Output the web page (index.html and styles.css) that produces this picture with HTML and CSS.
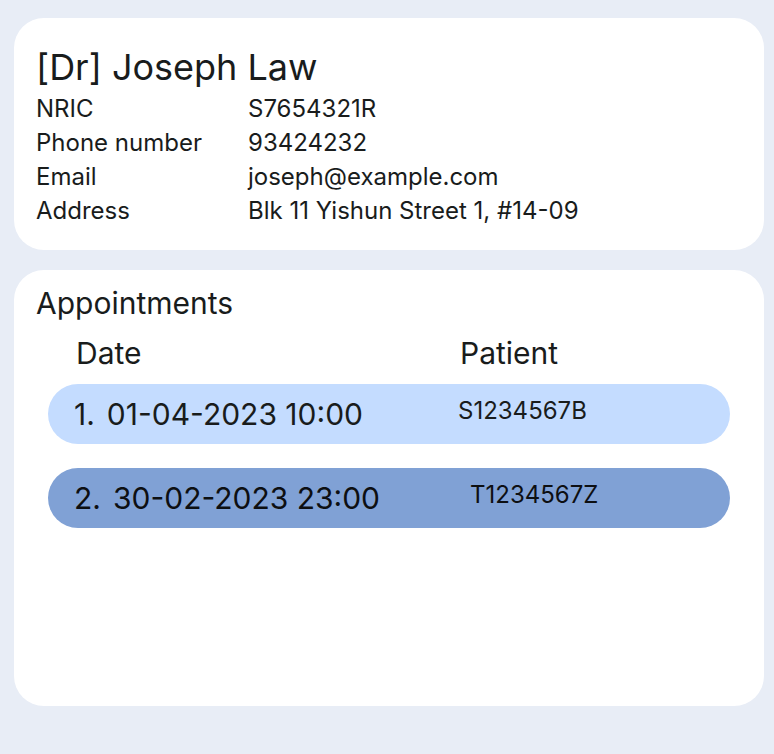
FILE: index.html
```html
<!DOCTYPE html>
<html lang="en">
<head>
<meta charset="utf-8">
<title>Doctor details</title>
<link rel="stylesheet" href="styles.css">
</head>
<body>
<main class="page">
  <section class="card profile">
    <h1 class="name">[Dr] Joseph Law</h1>
    <dl class="details">
      <dt>NRIC</dt><dd>S7654321R</dd>
      <dt>Phone number</dt><dd>93424232</dd>
      <dt>Email</dt><dd>joseph@example.com</dd>
      <dt>Address</dt><dd>Blk 11 Yishun Street 1, #14-09</dd>
    </dl>
  </section>
  <section class="card appointments">
    <h2 class="title">Appointments</h2>
    <table class="list">
      <thead>
        <tr class="head"><th>Date</th><th>Patient</th></tr>
      </thead>
      <tbody>
        <tr class="row"><td class="date"><span>1.</span><span>01-04-2023 10:00</span></td><td class="patient">S1234567B</td></tr>
        <tr class="row row-alt"><td class="date"><span>2.</span><span>30-02-2023 23:00</span></td><td class="patient">T1234567Z</td></tr>
      </tbody>
    </table>
  </section>
</main>
</body>
</html>
```
FILE: styles.css
```css
* {
  box-sizing: border-box;
}

body {
  margin: 0;
  background: #e8edf6;
  color: #191c1c;
  font-family: Inter, "Liberation Sans", sans-serif;
}

.page {
  display: flex;
  flex-direction: column;
  gap: 20px;
  min-height: 100vh;
  padding: 18px 10px 48px 14px;
}

.card {
  background: #fff;
  border-radius: 30px;
}

.profile {
  padding: 24px 22px 22px;
}

.appointments {
  flex: 1;
  padding: 14px 34px 24px;
}

h1,
h2,
dl,
dd {
  margin: 0;
  font-weight: 400;
}

.name {
  font-size: 36px;
  line-height: 50px;
}

.details {
  display: grid;
  grid-template-columns: 212px 1fr;
  font-size: 24px;
  line-height: 34px;
}

.title {
  margin-left: -12px;
  font-size: 30px;
  line-height: 38px;
}

.list,
.list thead,
.list tbody {
  display: block;
}

.head,
.row {
  display: grid;
  grid-template-columns: 384px 1fr;
  padding: 0 28px;
  font-size: 30px;
}

.head {
  height: 62px;
  padding-top: 12px;
  line-height: 38px;
}

.head th,
.row td {
  padding: 0;
  font-weight: 400;
  text-align: left;
}

.row {
  height: 60px;
  padding: 0 26px;
  border-radius: 30px;
  background: #c4dcff;
  line-height: 60px;
}

.row + .row {
  margin-top: 24px;
}

.row-alt {
  grid-template-columns: 396px 1fr;
  background: #80a1d5;
  color: #0d0f12;
}

.date {
  display: flex;
  gap: 12px;
}

.row .patient {
  font-size: 24px;
  line-height: 54px;
}
```
